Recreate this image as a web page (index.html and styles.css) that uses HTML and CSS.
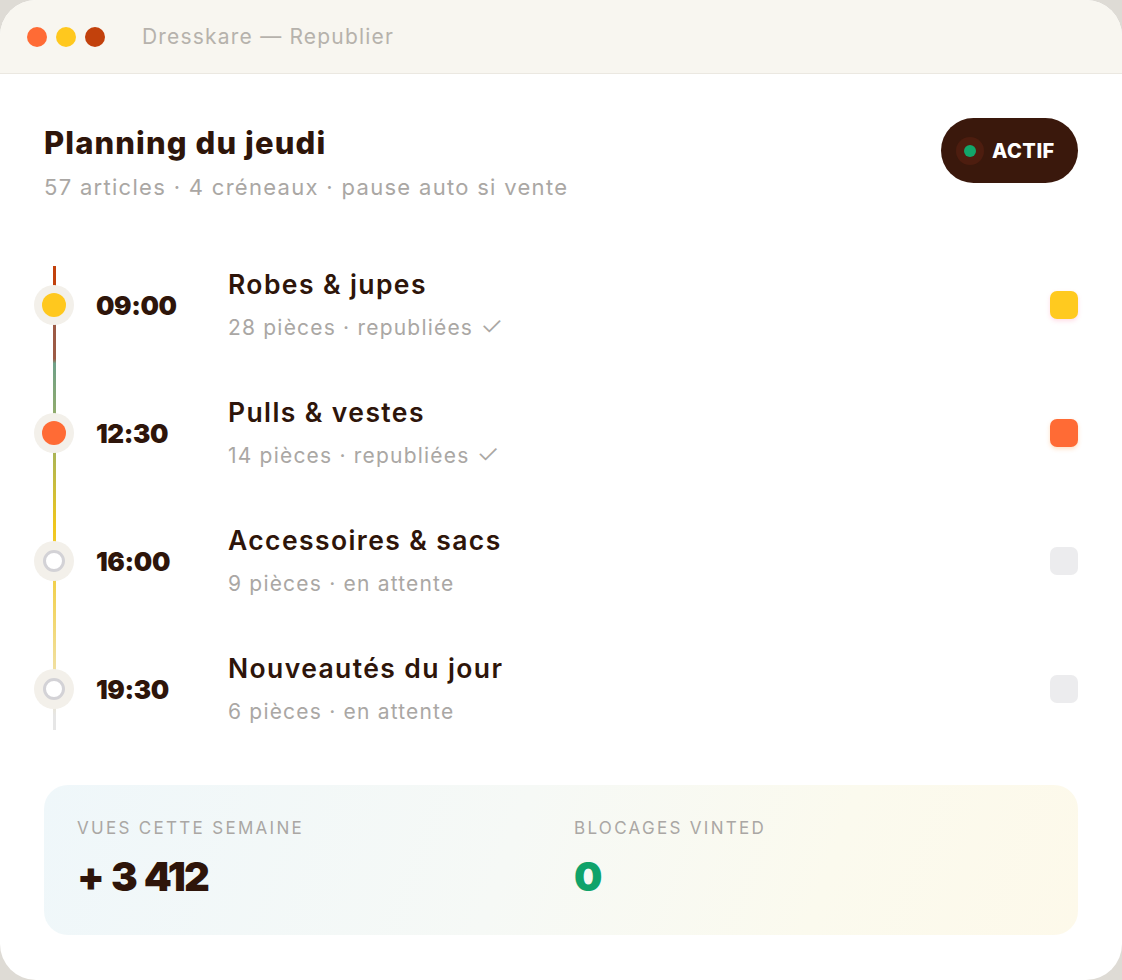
FILE: index.html
```html
<!DOCTYPE html>
<html lang="fr">
<head>
<meta charset="utf-8">
<title>Dresskare — Republier</title>
<link rel="stylesheet" href="styles.css">
</head>
<body>
<div class="window">
  <div class="titlebar">
    <div class="dots">
      <span class="dot dot-orange"></span>
      <span class="dot dot-yellow"></span>
      <span class="dot dot-rust"></span>
    </div>
    <div class="wintitle">Dresskare — Republier</div>
  </div>
  <div class="content">
    <div class="header">
      <div class="heading">
        <h1 class="title">Planning du jeudi</h1>
        <p class="subtitle">57 articles · 4 créneaux · pause auto si vente</p>
      </div>
      <div class="pill"><span class="pill-dot"></span><span class="pill-text">ACTIF</span></div>
    </div>

    <div class="timeline">
      <div class="row">
        <div class="node"><span class="core core-yellow"></span></div>
        <div class="time">09:00</div>
        <div class="info">
          <div class="name">Robes &amp; jupes</div>
          <div class="meta">28 pièces · republiées <span class="tick">✓</span></div>
        </div>
        <div class="check check-yellow"></div>
      </div>
      <div class="row">
        <div class="node"><span class="core core-orange"></span></div>
        <div class="time">12:30</div>
        <div class="info">
          <div class="name">Pulls &amp; vestes</div>
          <div class="meta">14 pièces · republiées <span class="tick">✓</span></div>
        </div>
        <div class="check check-orange"></div>
      </div>
      <div class="row">
        <div class="node"><span class="core core-empty"></span></div>
        <div class="time">16:00</div>
        <div class="info">
          <div class="name">Accessoires &amp; sacs</div>
          <div class="meta">9 pièces · en attente</div>
        </div>
        <div class="check"></div>
      </div>
      <div class="row">
        <div class="node"><span class="core core-empty"></span></div>
        <div class="time">19:30</div>
        <div class="info">
          <div class="name">Nouveautés du jour</div>
          <div class="meta">6 pièces · en attente</div>
        </div>
        <div class="check"></div>
      </div>
    </div>

    <div class="stats">
      <div class="stat">
        <div class="stat-label">VUES CETTE SEMAINE</div>
        <div class="stat-value">+ 3 412</div>
      </div>
      <div class="stat">
        <div class="stat-label">BLOCAGES VINTED</div>
        <div class="stat-value stat-green">0</div>
      </div>
    </div>
  </div>
</div>
</body>
</html>
```

FILE: styles.css
```css
* { box-sizing: border-box; }
html, body {
  margin: 0;
  padding: 0;
  background: #dedbd5;
}
body {
  font-family: "Inter", "Open Sans", "DejaVu Sans", sans-serif;
  color: #2e150a;
}
.window {
  width: 1122px;
  height: 980px;
  background: #ffffff;
  border-radius: 36px;
  overflow: hidden;
}
.titlebar {
  height: 74px;
  background: #f8f6f0;
  border-bottom: 1px solid #ebe8e1;
  display: flex;
  align-items: center;
  padding-left: 27px;
  gap: 37px;
}
.dots {
  display: flex;
  gap: 9px;
}
.dot {
  width: 20px;
  height: 20px;
  border-radius: 50%;
  display: block;
}
.dot-orange { background: #ff6b35; }
.dot-yellow { background: #ffc81e; }
.dot-rust { background: #c2410c; }
.wintitle {
  font-size: 21px;
  color: #b6b2ac;
  letter-spacing: 1.2px;
}
.content {
  padding: 0 44px;
}
.header {
  display: flex;
  justify-content: space-between;
  align-items: flex-start;
  padding-top: 49px;
}
.title {
  margin: 0;
  font-size: 31px;
  line-height: 39px;
  font-weight: 800;
  letter-spacing: 1.1px;
  color: #2e150a;
}
.subtitle {
  margin: 11px 0 0;
  font-size: 22px;
  line-height: 29px;
  letter-spacing: 1.3px;
  color: #aaa7a4;
}
.pill {
  margin-top: -5px;
  height: 65px;
  width: 137px;
  border-radius: 33px;
  background: #3a180c;
  display: flex;
  align-items: center;
  padding-left: 15px;
  gap: 8px;
}
.pill-dot {
  width: 28px;
  height: 28px;
  border-radius: 50%;
  background: #4d1d0f;
  display: flex;
  align-items: center;
  justify-content: center;
}
.pill-dot::after {
  content: "";
  width: 12px;
  height: 12px;
  border-radius: 50%;
  background: #12a66a;
}
.pill-text {
  color: #ffffff;
  font-size: 20px;
  font-weight: 800;
  letter-spacing: 0.5px;
}
.timeline {
  position: relative;
  margin: 64px 0 0 -10px;
  display: flex;
  flex-direction: column;
  gap: 50px;
}
.timeline::before {
  content: "";
  position: absolute;
  left: 19px;
  top: 0;
  width: 3px;
  height: 464px;
  background: linear-gradient(#c2410c 0%, #c2410c 5%, #9c5a45 5.5%, #9c5a45 20%, #6fa088 21%, #a9b457 40%, #f0c61c 56%, #f2d66a 75%, #f0e2b0 90%, #e6e6e6 97%);
}
.row {
  position: relative;
  height: 78px;
  display: flex;
  align-items: center;
}
.node {
  width: 40px;
  height: 40px;
  border-radius: 50%;
  background: #f3f0ea;
  display: flex;
  align-items: center;
  justify-content: center;
  flex-shrink: 0;
}
.core {
  width: 24px;
  height: 24px;
  border-radius: 50%;
  display: block;
}
.core-yellow { background: #ffc81e; }
.core-orange { background: #ff6b35; }
.core-empty {
  width: 22px;
  height: 22px;
  background: #ffffff;
  border: 3.5px solid #d3d2d6;
}
.time {
  width: 154px;
  padding-left: 22px;
  font-size: 26px;
  font-weight: 900;
  letter-spacing: -0.4px;
  color: #2e150a;
  flex-shrink: 0;
}
.info {
  flex: 1;
  display: flex;
  flex-direction: column;
  gap: 12px;
  margin-top: -2px;
}
.name {
  font-size: 26.5px;
  line-height: 34px;
  font-weight: 600;
  letter-spacing: 1.4px;
  color: #2e150a;
}
.meta {
  font-size: 21px;
  line-height: 29px;
  letter-spacing: 1.2px;
  color: #aaa7a4;
}
.tick {
  font-size: 26px;
  line-height: 0;
  letter-spacing: 0;
  font-weight: 300;
}
.check {
  width: 28px;
  height: 28px;
  border-radius: 7px;
  background: #ececee;
  flex-shrink: 0;
}
.check-yellow {
  background: #ffca1f;
  box-shadow: 0 2px 4px rgba(255, 120, 160, 0.25);
}
.check-orange {
  background: #ff6b35;
  box-shadow: 0 2px 4px rgba(255, 150, 60, 0.3);
}
.stats {
  margin-top: 57px;
  height: 150px;
  border-radius: 24px;
  background: linear-gradient(110deg, #eff7fa 0%, #f6f9f6 45%, #fbfaee 75%, #fdf9ea 100%);
  display: grid;
  grid-template-columns: 497px 1fr;
  padding: 33px 33px 0;
}
.stat-label {
  font-size: 17px;
  line-height: 20px;
  letter-spacing: 2.3px;
  color: #aaa7a4;
}
.stat-value {
  margin-top: 14px;
  font-size: 40px;
  line-height: 50px;
  font-weight: 900;
  letter-spacing: -1.9px;
  word-spacing: 2px;
  color: #2e150a;
}
.stat-green { color: #10a36a; letter-spacing: 0; }
```
